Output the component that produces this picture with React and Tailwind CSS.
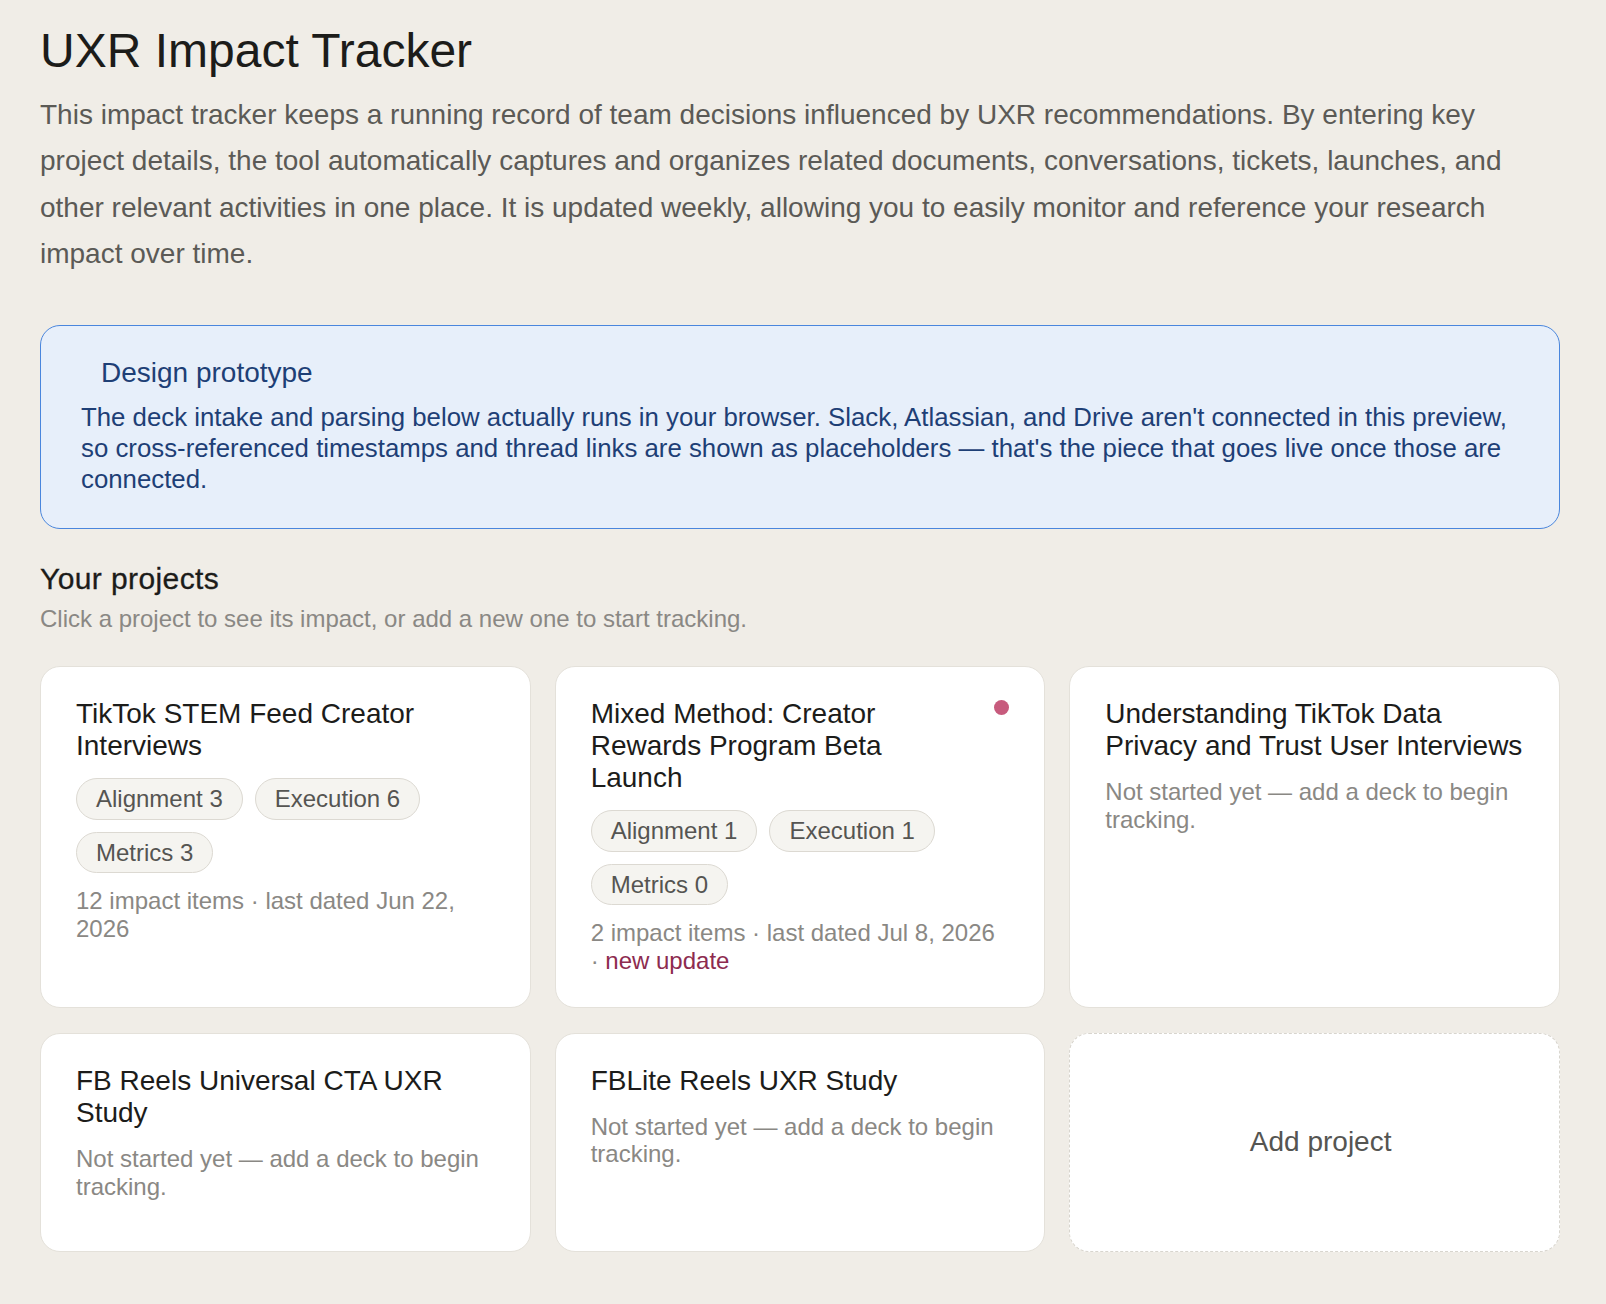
import React from "react";

const projects = [
  {
    id: 1,
    title: "TikTok STEM Feed Creator Interviews",
    counts: { Alignment: 3, Execution: 6, Metrics: 3 },
    items: 12,
    lastDated: "Jun 22, 2026",
  },
  {
    id: 2,
    title: "Mixed Method: Creator Rewards Program Beta Launch",
    counts: { Alignment: 1, Execution: 1, Metrics: 0 },
    items: 2,
    lastDated: "Jul 8, 2026",
    hasUpdate: true,
  },
  {
    id: 3,
    title: "Understanding TikTok Data Privacy and Trust User Interviews",
  },
  {
    id: 4,
    title: "FB Reels Universal CTA UXR Study",
  },
  {
    id: 5,
    title: "FBLite Reels UXR Study",
  },
];

const ProjectCard = ({ project }) => {
  const started = !!project.counts;

  return (
    <div className="flex flex-col min-h-[219px] bg-white border border-[#e4e1da] rounded-[20px] pt-[31px] pb-[32px] pl-[35px] pr-[33px] cursor-pointer">
      <div className="flex items-start">
        <h3 className="flex-1 text-[28px] leading-[1.15] text-[#1c1c1a] font-normal">
          {project.title}
        </h3>
        {project.hasUpdate && (
          <div className="w-[48px] shrink-0 flex justify-end pt-[2px] pr-[2px]">
            <span className="block w-[15px] h-[15px] rounded-full bg-[#c75b7d]" />
          </div>
        )}
      </div>

      {started ? (
        <>
          <div className="flex flex-wrap gap-3 mt-4">
            {Object.entries(project.counts).map(([label, n]) => (
              <span
                key={label}
                className="inline-flex items-center px-[19px] py-[6px] rounded-full border border-[#dcd9d2] bg-[#f5f4f0] text-[24px] leading-[1.15] text-[#555552]"
              >
                {label} {n}
              </span>
            ))}
          </div>
          <p className="mt-[14px] text-[24px] leading-[1.15] text-[#8a8884]">
            {project.items} impact items · last dated {project.lastDated}
            {project.hasUpdate && (
              <>
                {" "}
                <span className="whitespace-nowrap">
                  · <span className="text-[#8d2b4f]">new update</span>
                </span>
              </>
            )}
          </p>
        </>
      ) : (
        <p className="mt-4 text-[24px] leading-[1.15] text-[#8a8884]">
          Not started yet — add a deck to begin tracking.
        </p>
      )}
    </div>
  );
};

const App = () => {
  return (
    <div
      className="min-h-screen bg-[#f0ede7] pl-[40px] pt-[23px] pb-[54px]"
      style={{ fontFamily: '"Liberation Sans", Arial, sans-serif' }}
    >
      <div className="w-[1520px]">
        <h1 className="text-[48px] leading-[1.15] text-[#1c1c1a] font-normal">
          UXR Impact Tracker
        </h1>
        <p className="mt-[14px] text-[28px] leading-[46.3px] text-[#5b5a56]">
          This impact tracker keeps a running record of team decisions influenced by UXR
          recommendations. By entering key project details, the tool automatically captures and
          organizes related documents, conversations, tickets, launches, and other relevant
          activities in one place. It is updated weekly, allowing you to easily monitor and
          reference your research impact over time.
        </p>

        {/* Prototype notice */}
        <div className="mt-[48px] bg-[#e7effa] border border-[#4a86dd] rounded-[20px] px-10 pt-[31px] pb-[33px]">
          <h2 className="ml-[20px] text-[28px] leading-[1.15] text-[#1e3f76] font-normal">
            Design prototype
          </h2>
          <p className="mt-3 text-[25.8px] leading-[31px] text-[#1e3f76]">
            The deck intake and parsing below actually runs in your browser. Slack, Atlassian, and
            Drive aren't connected in this preview, so cross-referenced timestamps and thread links
            are shown as placeholders — that's the piece that goes live once those are connected.
          </p>
        </div>

        <h2 className="mt-[33px] text-[30px] leading-[1.15] tracking-[0.4px] [-webkit-text-stroke:0.3px] text-[#1c1c1a] font-normal">
          Your projects
        </h2>
        <p className="mt-[9px] text-[24px] leading-[1.15] text-[#8a8884]">
          Click a project to see its impact, or add a new one to start tracking.
        </p>

        <div className="grid grid-cols-3 gap-x-6 gap-y-[25px] mt-[33px]">
          {projects.map((p) => (
            <ProjectCard key={p.id} project={p} />
          ))}
          <button className="flex items-center justify-center min-h-[219px] pl-[12px] bg-white border border-dashed border-[#d8d5ce] rounded-[20px] text-[28px] leading-[1.15] text-[#555552] cursor-pointer">
            Add project
          </button>
        </div>
      </div>
    </div>
  );
};

export default App;
